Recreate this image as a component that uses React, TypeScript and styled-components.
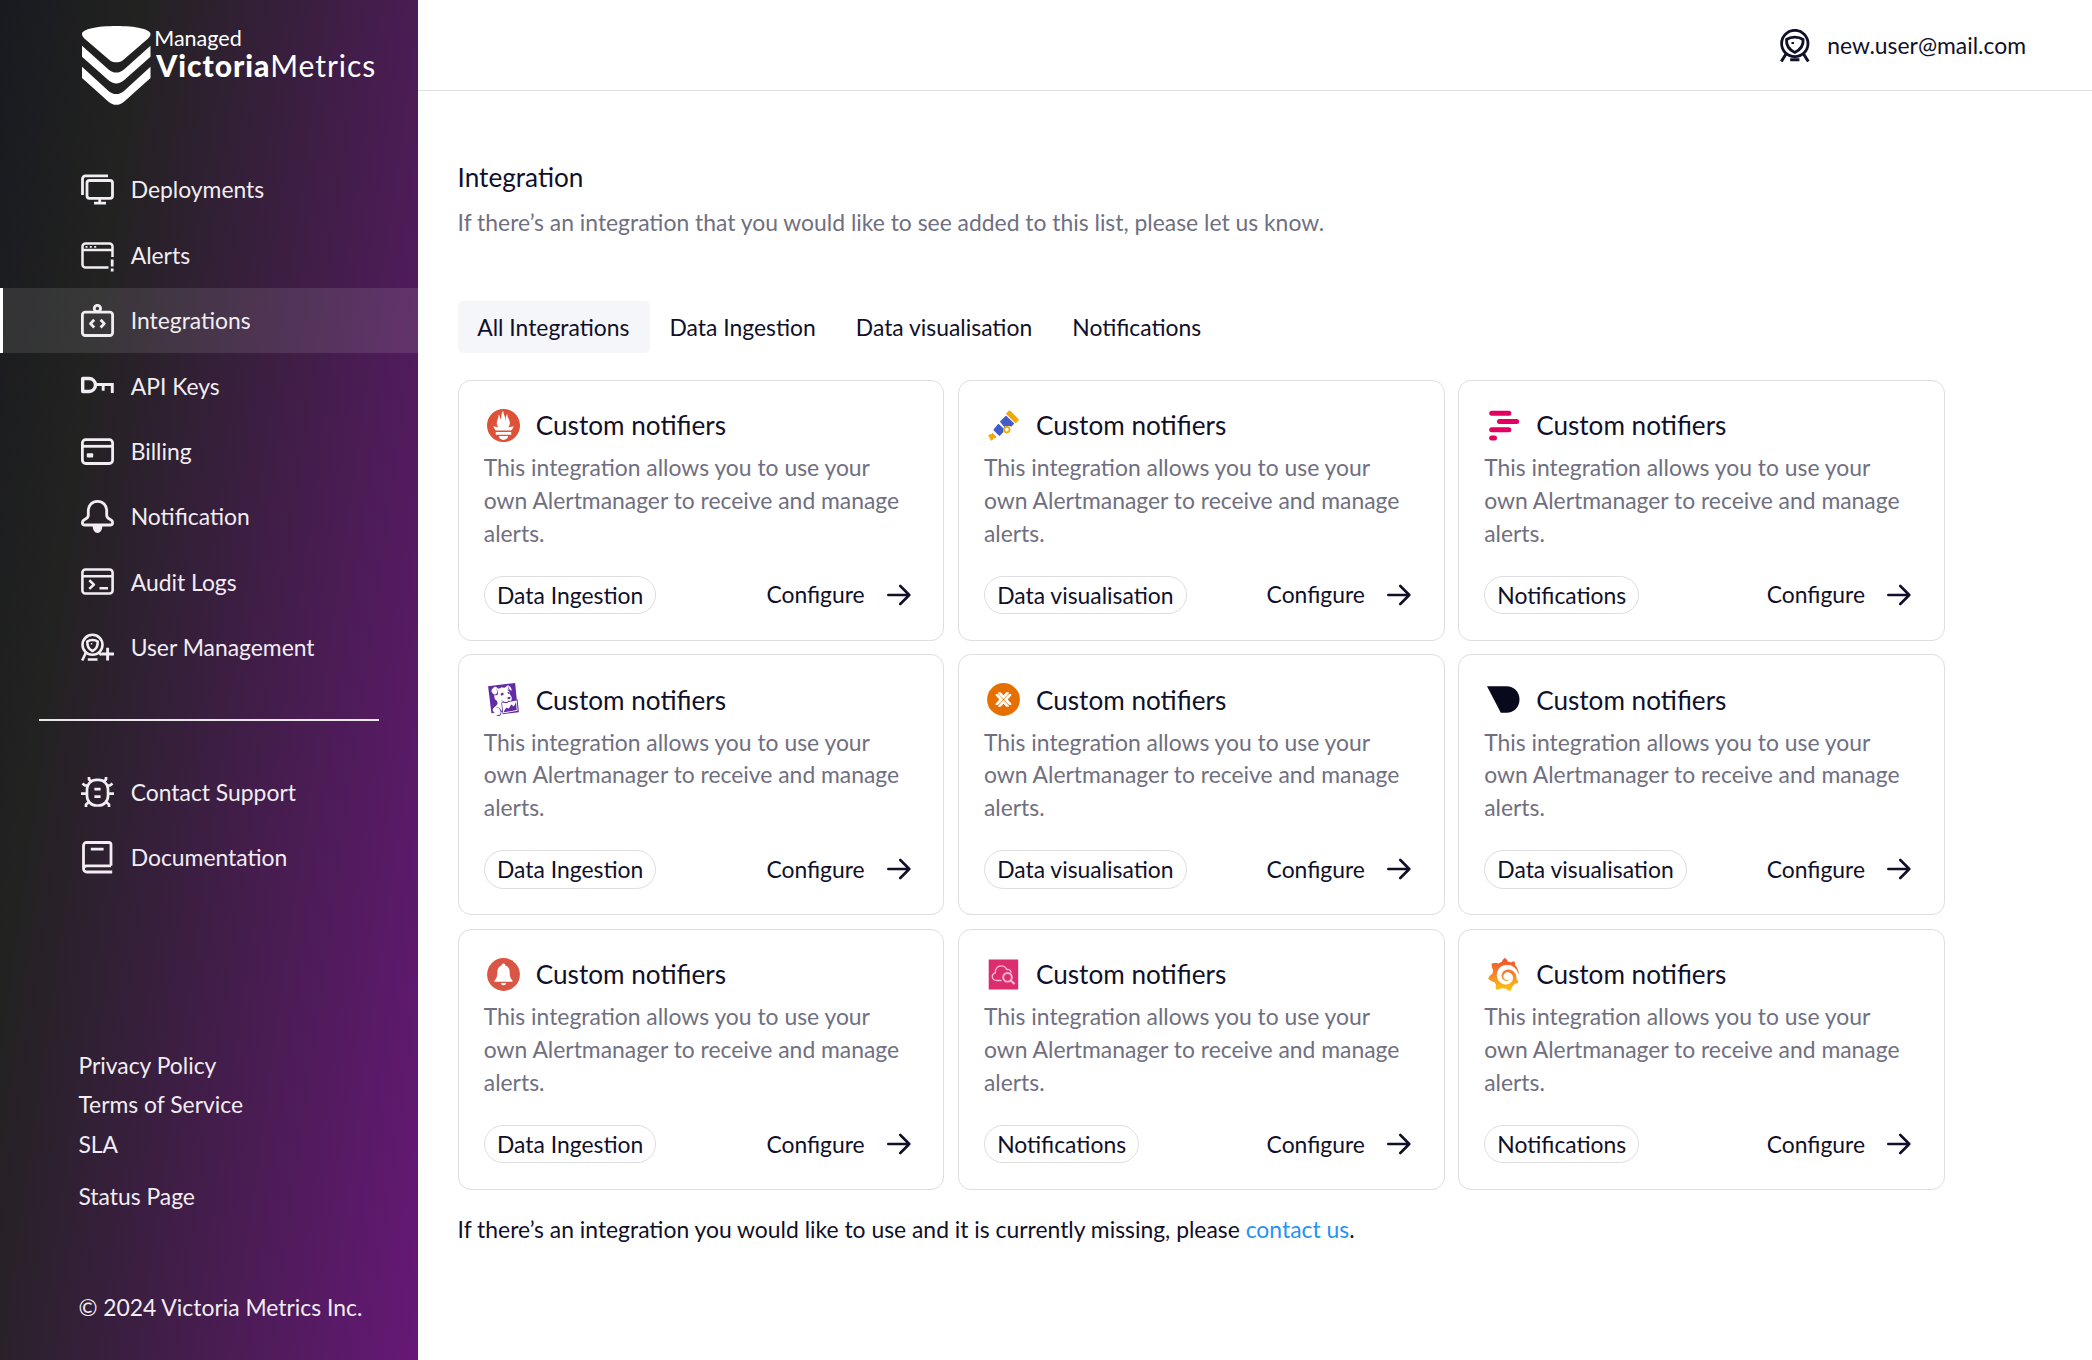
import React from "react";
import styled, { createGlobalStyle, css } from "styled-components";
import { SiPrometheus, SiDatadog, SiGrafana, SiProxmox } from "react-icons/si";

const ink = "#110f29";
const muted = "#706f7f";
const line = "#dedee0";

const GlobalStyle = createGlobalStyle`
  * { box-sizing: border-box; }
  body {
    margin: 0;
    background: #fff;
    color: ${ink};
    font-family: Lato, Carlito, "Open Sans", sans-serif;
    font-size: 22.88px;
    line-height: 32.7px;
    -webkit-font-smoothing: antialiased;
  }
  a { color: inherit; text-decoration: none; }
  h1, h2, p, ul { margin: 0; padding: 0; font-weight: 400; }
  ul { list-style: none; }
`;

const Page = styled.div`
  display: flex;
  width: 2092px;
  height: 1360px;
  overflow: hidden;
`;

/* ---------- Sidebar ---------- */

const Sidebar = styled.aside`
  flex: none;
  display: flex;
  flex-direction: column;
  width: 418.4px;
  height: 1360px;
  color: #f1edf2;
  background: linear-gradient(98deg, #191a20 0%, #222221 23%, #661877 100%);
`;

const Brand = styled.a`
  display: flex;
  gap: 3.5px;
  height: 157.1px;
  padding: 26px 0 0 81.8px;
  color: #fff;
`;

const BrandText = styled.span`
  display: flex;
  flex-direction: column;
  white-space: nowrap;
`;

const BrandTop = styled.span`
  font-size: 21.5px;
  line-height: 24px;
`;

const BrandName = styled.span`
  padding-left: 2px;
  font-size: 30px;
  line-height: 31px;
  letter-spacing: 0.95px;
  b { font-weight: 900; }
`;

const NavList = styled.ul`
  display: flex;
  flex-direction: column;
`;

const NavItem = styled.li<{ $active?: boolean }>`
  display: flex;
  align-items: center;
  gap: 16.3px;
  height: 65.36px;
  padding-left: 78.4px;
  border-left: 3.3px solid transparent;
  ${(p) =>
    p.$active &&
    css`
      border-left-color: #fff;
      background: rgba(255, 255, 255, 0.1);
      background-clip: padding-box;
    `}
  svg { flex: none; display: block; }
`;

const Divider = styled.hr`
  width: 340px;
  height: 2px;
  margin: 38.9px 0 38.8px 39.2px;
  border: 0;
  background: #ebe6ec;
`;

const LegalLinks = styled.ul`
  margin-top: 155.8px;
  padding-left: 78.4px;
  line-height: 39.2px;
`;

const LegalItem = styled.li<{ $spaced?: boolean }>`
  margin-top: ${(p) => (p.$spaced ? "13.1px" : "0")};
`;

const Copyright = styled.p`
  margin-top: 75px;
  padding-left: 78.4px;
`;

/* ---------- Main ---------- */

const Main = styled.main`
  flex: 1;
  display: flex;
  flex-direction: column;
  min-width: 0;
`;

const TopBar = styled.header`
  display: flex;
  justify-content: flex-end;
  align-items: center;
  gap: 17.5px;
  height: 91px;
  padding-right: 66px;
  border-bottom: 1px solid ${line};
`;

const Content = styled.section`
  display: flex;
  flex-direction: column;
  padding: 69px 0 0 39.2px;
`;

const Title = styled.h1`
  font-size: 26.15px;
  line-height: 34px;
`;

const Lead = styled.p`
  margin-top: 12px;
  color: ${muted};
`;

const Tabs = styled.div`
  display: flex;
  margin-top: 62.1px;
`;

const Tab = styled.button<{ $active?: boolean }>`
  height: 52.3px;
  padding: 0 20.4px 0 19.7px;
  border: 0;
  border-radius: 5px;
  background: ${(p) => (p.$active ? "#f4f6fa" : "transparent")};
  color: inherit;
  font: inherit;
`;

const Grid = styled.div`
  display: grid;
  grid-template-columns: repeat(3, 486.8px);
  gap: 13.4px;
  margin-top: 26.5px;
`;

const Card = styled.article`
  display: flex;
  flex-direction: column;
  height: 261.2px;
  padding: 24.5px 32.7px 0 25.2px;
  border: 1.3px solid ${line};
  border-radius: 13px;
`;

const CardHead = styled.div`
  display: flex;
  align-items: center;
  gap: 16px;
  height: 40px;
  padding-left: 3px;
  svg { flex: none; display: block; }
`;

const CardTitle = styled.h2`
  font-size: 26.15px;
  line-height: 40px;
`;

const CardText = styled.p`
  margin-top: 6px;
  color: ${muted};
`;

const CardFoot = styled.div`
  display: flex;
  justify-content: space-between;
  align-items: center;
  margin-top: 26.4px;
`;

const Tag = styled.span`
  height: 38.5px;
  padding: 0 12.2px;
  border: 1.3px solid ${line};
  border-radius: 20px;
  line-height: 36px;
`;

const Configure = styled.a`
  display: flex;
  align-items: center;
  gap: 22px;
`;

const Missing = styled.p`
  margin-top: 23px;
  a { color: #2493f2; }
`;

/* ---------- Icons ---------- */

type IconProps = { children: React.ReactNode; width?: number; stroke?: number };

const Line = ({ children, width = 33, stroke = 2.8 }: IconProps) => (
  <svg
    width={width}
    height={33}
    viewBox={`0 0 ${width} 33`}
    fill="none"
    stroke="currentColor"
    strokeWidth={stroke}
    strokeLinejoin="round"
  >
    {children}
  </svg>
);

const LogoMark = () => (
  <svg width="69" height="79" viewBox="0 0 69 79" fill="#fff">
    <path d="M0 8C0 3 15 0 34.300 0S68.500 3 68.500 8c0 2.500-1.800 4-5 6.800L41.500 33.700c-4 3.500-10.400 3.500-14.400 0L5 14.800C1.800 12 0 10.500 0 8Z" />
    <path d="M0 19.700 26.500 43.500c4.500 4.100 11 4.100 15.500 0L68.500 19.700V30.800L42 54.300c-4.500 4.100-11 4.100-15.500 0L0 30.800Z" />
    <path d="M0 40.800 26.500 65c4.500 4.100 11 4.100 15.500 0L68.500 40.800V52L42 75.700c-4.500 4.100-11 4.100-15.500 0L0 52Z" />
  </svg>
);

const DeploymentsIcon = () => (
  <Line>
    <path d="M27 2.800H4.500a3 3 0 0 0-3 3V22" />
    <rect x="6" y="7.500" width="25.500" height="17.800" rx="2.500" />
    <path d="M18.700 25v5M13 30.200h12" />
  </Line>
);

const AlertsIcon = () => (
  <Line stroke={2.5}>
    <path d="M27.500 28.600H4.500a3 3 0 0 1-3-3V7.600a3 3 0 0 1 3-3h24a3 3 0 0 1 3 3V18M1.500 11h30" />
    <path d="M4.500 7.900h2M8.800 7.900h2M13.200 7.900h2" strokeWidth="1.600" />
    <path d="M31.200 20.500v7M31.200 29.500v3" strokeWidth="2.800" />
  </Line>
);

const IntegrationsIcon = () => (
  <Line>
    <circle cx="16.400" cy="4.500" r="3.200" />
    <rect x="1.400" y="8.200" width="30.200" height="23.300" rx="2.800" />
    <path d="m13.200 15.700-3.700 3.900 3.700 3.900M19.600 15.700l3.700 3.900-3.700 3.900" />
  </Line>
);

const KeyIcon = () => (
  <Line stroke={3.4}>
    <path d="M1.700 9.500h6.300a6.500 6.500 0 0 1 0 13H1.700Z" />
    <path d="M14.500 15.500h16.800V24M22.200 16v5.800" strokeLinejoin="miter" strokeWidth="2.900" />
  </Line>
);

const BillingIcon = () => (
  <Line>
    <rect x="1.400" y="4.700" width="30.200" height="23.800" rx="3.200" />
    <path d="M1.400 11.300h30.200" />
    <rect x="5.800" y="18.200" width="6.400" height="4.300" rx="1" fill="currentColor" stroke="none" />
  </Line>
);

const BellIcon = () => (
  <Line>
    <path d="M16.500 1.400c-5.400 0-9.200 4-9.200 9.300v4.500c0 2-1.200 3-3.200 4-1.700.9-2.700 1.900-2.700 3.500 0 1.500 1 2.300 2.500 2.300h25.200c1.500 0 2.500-.8 2.500-2.300 0-1.600-1-2.600-2.700-3.500-2-1-3.200-2-3.200-4v-4.500c0-5.300-3.800-9.300-9.200-9.300Z" />
    <path d="M11.700 26h9.600c0 4-2 7-4.800 7s-4.800-3-4.800-7Z" fill="currentColor" stroke="none" />
  </Line>
);

const AuditIcon = () => (
  <Line stroke={2.6}>
    <rect x="1.400" y="4.500" width="30.200" height="24" rx="3" />
    <path d="M1.400 11.200h30.200M8.300 15.300l4.600 4.300-4.600 4.300M18.500 23.300h8.500" />
  </Line>
);

const UserManagementIcon = () => (
  <Line stroke={2.6}>
    <circle cx="11.500" cy="13.800" r="10" />
    <path d="M6.300 10.600c2.800-2.200 7.600-2.200 10.400 0 .3 4.200-1.700 7.600-5.200 9.400-3.500-1.800-5.500-5.200-5.200-9.400Z" />
    <path d="M9.800 12.800h1.500" strokeWidth="1.400" />
    <path d="M5 21.500 1.200 29.500M18 21.300l2.300 2.800M6.800 28.500h9.700" />
    <path d="M20.300 23h12.700M26.600 16.700v12.800" strokeWidth="2.900" />
  </Line>
);

const SupportIcon = () => (
  <Line stroke={2.7}>
    <rect x="6" y="3.800" width="21" height="25.700" rx="9.500" />
    <path d="M0 17.600h6M27 17.600h6M1.500 7.500l2.500 2h4M31.500 7.500l-2.500 2h-4M8 1v2.500l3 2.500M25 1v2.500L22 6M5 31v-2.500l3.500-3M28 31v-2.500l-3.500-3M13.400 13.200h6.200M13.400 20.700h6.200" />
  </Line>
);

const DocsIcon = () => (
  <Line stroke={2.8}>
    <path d="M30 24.800V3.500a2 2 0 0 0-2-2H5.500a3 3 0 0 0-3 3v23.200a3.300 3.300 0 0 0 3.300 3.300H31.200M2.500 28c0-2 1.300-3.200 3.300-3.200H30M9.800 8.200h12.800" />
  </Line>
);

const AvatarIcon = () => (
  <Line width={30} stroke={2.8}>
    <circle cx="14.800" cy="14.500" r="13.200" />
    <path d="M6.500 10.500c4.500-3.300 12.100-3.300 16.600 0 .4 5.700-2.800 10.400-8.300 12.900-5.500-2.500-8.700-7.200-8.300-12.900Z" />
    <path d="M11.500 14h2.500" strokeWidth="2" />
    <path d="M6 25 1.300 32.500M23.600 25l4.700 7.500M10.200 30.800h9.200" strokeWidth="3" />
  </Line>
);

const ArrowIcon = () => (
  <svg width="24" height="22" viewBox="0 0 24 22" fill="none" stroke="currentColor" strokeWidth="2.600" strokeLinecap="round" strokeLinejoin="round">
    <path d="M1.300 11h21M13.300 2l9 9-9 9" />
  </svg>
);

const Mark = ({ children }: { children: React.ReactNode }) => (
  <svg width="33" height="33" viewBox="0 0 33 33" fill="none">
    {children}
  </svg>
);

const TelescopeMark = () => (
  <Mark>
    <path d="M5.500 24.500 9 28l-1 1-1.800-.3-.7 2-1.200.5-1.500-3L1.700 27l.8-1.200 2-.1Z" fill="#f5a800" stroke="#f5a800" strokeLinejoin="round" />
    <path d="M11.500 15.800 16 20l-.6 2.800-3 3.200L7.400 20.800Z" fill="#425cc7" stroke="#425cc7" strokeWidth="1.700" strokeLinejoin="round" />
    <path d="M13.700 12.600 19 7.500l7.300 7-2 2.300-3.500-.7-3.300 1.200Z" fill="#425cc7" stroke="#425cc7" strokeWidth="1.300" strokeLinejoin="round" />
    <path d="m20.300 4.700 2.200-2.200 8.300 8.300-2.200 2.200Z" fill="#f5a800" stroke="#f5a800" strokeWidth="2" strokeLinejoin="round" />
    <circle cx="19.800" cy="20.600" r="2.800" stroke="#f5a800" strokeWidth="1.800" fill="#fff" />
  </Mark>
);

const StripesMark = () => (
  <Mark>
    <path d="M4.700 4.200h17.100M12.500 12.500h17.100M4.700 20.700h17.100M4.700 28.900h2.800" stroke="#e20062" strokeWidth="5" strokeLinecap="round" />
  </Mark>
);

const ExchangeMark = () => (
  <Mark>
    <circle cx="16.500" cy="16.500" r="16.400" fill="#e57001" />
    <SiProxmox x={8.2} y={8.2} size={16.6} color="#fff" />
  </Mark>
);

const WedgeMark = () => (
  <Mark>
    <path d="M0 3.200H19.500C27 3.200 32.500 8.800 32.500 16.500S27 29.800 19.500 29.800H13.800Z" fill="#08091b" />
  </Mark>
);

const AlertmanagerMark = () => (
  <Mark>
    <circle cx="16.500" cy="16.500" r="16.400" fill="#da5543" />
    <path d="M16.500 5.500c1.100 0 1.900.8 1.900 1.900 3 .9 4.300 3.500 4.300 6.900 0 4 .7 6.300 2.800 8.200v1.300H7.500v-1.300c2.100-1.900 2.800-4.200 2.800-8.200 0-3.400 1.300-6 4.300-6.900 0-1.100.8-1.900 1.900-1.900Z" fill="#fff" />
    <path d="M13.800 25h5.400c-.3 1.500-1.300 2.200-2.700 2.200S14.100 26.500 13.800 25Z" fill="#fff" />
  </Mark>
);

const CloudWatchMark = () => (
  <Mark>
    <rect x="1.700" y="1.500" width="29.500" height="30" fill="#dc2d6f" />
    <g stroke="#f6bdd3" strokeWidth="1.300">
      <path d="M14.500 22.500H9.500c-2.600 0-4.200-1.700-4.200-3.900 0-2 1.300-3.500 3-3.800-.4-4 2.200-7 5.800-7 2.700 0 4.700 1.400 5.600 3.700 2.500-.7 4.200.8 4.400 3.200" />
      <circle cx="20.500" cy="19.300" r="4.300" strokeWidth="1.900" />
      <path d="m23.600 22.300 3.900 3.700" strokeWidth="2.200" />
    </g>
  </Mark>
);

const GrafanaMark = () => (
  <Mark>
    <defs>
      <linearGradient id="flame" x1="0" y1="0" x2="0" y2="1">
        <stop offset="0" stopColor="#f0502b" />
        <stop offset="0.5" stopColor="#f4852b" />
        <stop offset="1" stopColor="#fcc80c" />
      </linearGradient>
    </defs>
    <SiGrafana size={33} fill="url(#flame)" />
  </Mark>
);

const PrometheusMark = () => <SiPrometheus size={33} color="#dd5136" />;
const DatadogMark = () => <SiDatadog size={33} color="#632ca6" />;

/* ---------- Data ---------- */

const primaryNav = [
  { label: "Deployments", Icon: DeploymentsIcon },
  { label: "Alerts", Icon: AlertsIcon },
  { label: "Integrations", Icon: IntegrationsIcon, active: true },
  { label: "API Keys", Icon: KeyIcon },
  { label: "Billing", Icon: BillingIcon },
  { label: "Notification", Icon: BellIcon },
  { label: "Audit Logs", Icon: AuditIcon },
  { label: "User Management", Icon: UserManagementIcon },
];

const secondaryNav = [
  { label: "Contact Support", Icon: SupportIcon },
  { label: "Documentation", Icon: DocsIcon },
];

const tabs = ["All Integrations", "Data Ingestion", "Data visualisation", "Notifications"];

const cards = [
  { Logo: PrometheusMark, tag: "Data Ingestion" },
  { Logo: TelescopeMark, tag: "Data visualisation" },
  { Logo: StripesMark, tag: "Notifications" },
  { Logo: DatadogMark, tag: "Data Ingestion" },
  { Logo: ExchangeMark, tag: "Data visualisation" },
  { Logo: WedgeMark, tag: "Data visualisation" },
  { Logo: AlertmanagerMark, tag: "Data Ingestion" },
  { Logo: CloudWatchMark, tag: "Notifications" },
  { Logo: GrafanaMark, tag: "Notifications" },
];

export default function App() {
  return (
    <Page>
      <GlobalStyle />
      <Sidebar>
        <Brand href="#">
          <LogoMark />
          <BrandText>
            <BrandTop>Managed</BrandTop>
            <BrandName>
              <b>Victoria</b>Metrics
            </BrandName>
          </BrandText>
        </Brand>
        <NavList>
          {primaryNav.map(({ label, Icon, active }) => (
            <NavItem key={label} $active={active}>
              <Icon />
              {label}
            </NavItem>
          ))}
        </NavList>
        <Divider />
        <NavList>
          {secondaryNav.map(({ label, Icon }) => (
            <NavItem key={label}>
              <Icon />
              {label}
            </NavItem>
          ))}
        </NavList>
        <LegalLinks>
          <LegalItem>Privacy Policy</LegalItem>
          <LegalItem>Terms of Service</LegalItem>
          <LegalItem>SLA</LegalItem>
          <LegalItem $spaced>Status Page</LegalItem>
        </LegalLinks>
        <Copyright>© 2024 Victoria Metrics Inc.</Copyright>
      </Sidebar>
      <Main>
        <TopBar>
          <AvatarIcon />
          <span>new.user@mail.com</span>
        </TopBar>
        <Content>
          <Title>Integration</Title>
          <Lead>If there’s an integration that you would like to see added to this list, please let us know.</Lead>
          <Tabs>
            {tabs.map((tab, i) => (
              <Tab key={tab} $active={i === 0}>
                {tab}
              </Tab>
            ))}
          </Tabs>
          <Grid>
            {cards.map(({ Logo, tag }, i) => (
              <Card key={i}>
                <CardHead>
                  <Logo />
                  <CardTitle>Custom notifiers</CardTitle>
                </CardHead>
                <CardText>This integration allows you to use your own Alertmanager to receive and manage alerts.</CardText>
                <CardFoot>
                  <Tag>{tag}</Tag>
                  <Configure href="#">
                    Configure
                    <ArrowIcon />
                  </Configure>
                </CardFoot>
              </Card>
            ))}
          </Grid>
          <Missing>
            If there’s an integration you would like to use and it is currently missing, please <a href="#">contact us</a>.
          </Missing>
        </Content>
      </Main>
    </Page>
  );
}
